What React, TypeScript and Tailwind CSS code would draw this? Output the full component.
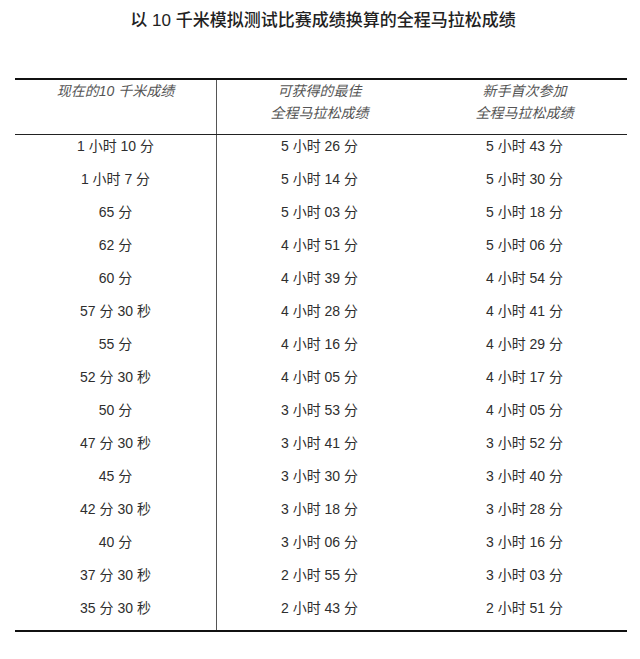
const rows: [string, string, string][] = [
  ["1 小时 10 分", "5 小时 26 分", "5 小时 43 分"],
  ["1 小时 7 分", "5 小时 14 分", "5 小时 30 分"],
  ["65 分", "5 小时 03 分", "5 小时 18 分"],
  ["62 分", "4 小时 51 分", "5 小时 06 分"],
  ["60 分", "4 小时 39 分", "4 小时 54 分"],
  ["57 分 30 秒", "4 小时 28 分", "4 小时 41 分"],
  ["55 分", "4 小时 16 分", "4 小时 29 分"],
  ["52 分 30 秒", "4 小时 05 分", "4 小时 17 分"],
  ["50 分", "3 小时 53 分", "4 小时 05 分"],
  ["47 分 30 秒", "3 小时 41 分", "3 小时 52 分"],
  ["45 分", "3 小时 30 分", "3 小时 40 分"],
  ["42 分 30 秒", "3 小时 18 分", "3 小时 28 分"],
  ["40 分", "3 小时 06 分", "3 小时 16 分"],
  ["37 分 30 秒", "2 小时 55 分", "3 小时 03 分"],
  ["35 分 30 秒", "2 小时 43 分", "2 小时 51 分"],
];

const App = () => {
  return (
    <div
      className="w-[640px] h-[659px] bg-white text-[#2e2e2e]"
      style={{ fontFamily: '"Liberation Sans", "Noto Sans CJK SC", sans-serif' }}
    >
      <h1 className="pt-[9px] h-[78px] text-center text-[17px] leading-6 font-medium text-[#222] pl-[6px]">
        以 10 千米模拟测试比赛成绩换算的全程马拉松成绩
      </h1>

      <div className="mx-[15px] w-[612px] border-t-2 border-b-2 border-[#111]">
        {/* header */}
        <div className="grid grid-cols-[202px_205px_205px] h-[55px] border-b border-[#222] italic text-[14px] leading-[22px] text-[#555]">
          <div className="border-r border-[#555] text-center">现在的10 千米成绩</div>
          <div className="text-center">
            可获得的最佳
            <br />
            全程马拉松成绩
          </div>
          <div className="text-center">
            新手首次参加
            <br />
            全程马拉松成绩
          </div>
        </div>

        {/* body */}
        <div className="grid grid-cols-[202px_205px_205px] text-[14px] leading-5">
          {rows.map((r, i) => (
            <div key={i} className="contents">
              <div className="h-[33px] pt-px text-center border-r border-[#555]">{r[0]}</div>
              <div className="h-[33px] pt-px text-center">{r[1]}</div>
              <div className="h-[33px] pt-px text-center">{r[2]}</div>
            </div>
          ))}
        </div>
      </div>
    </div>
  );
};

export default App;
